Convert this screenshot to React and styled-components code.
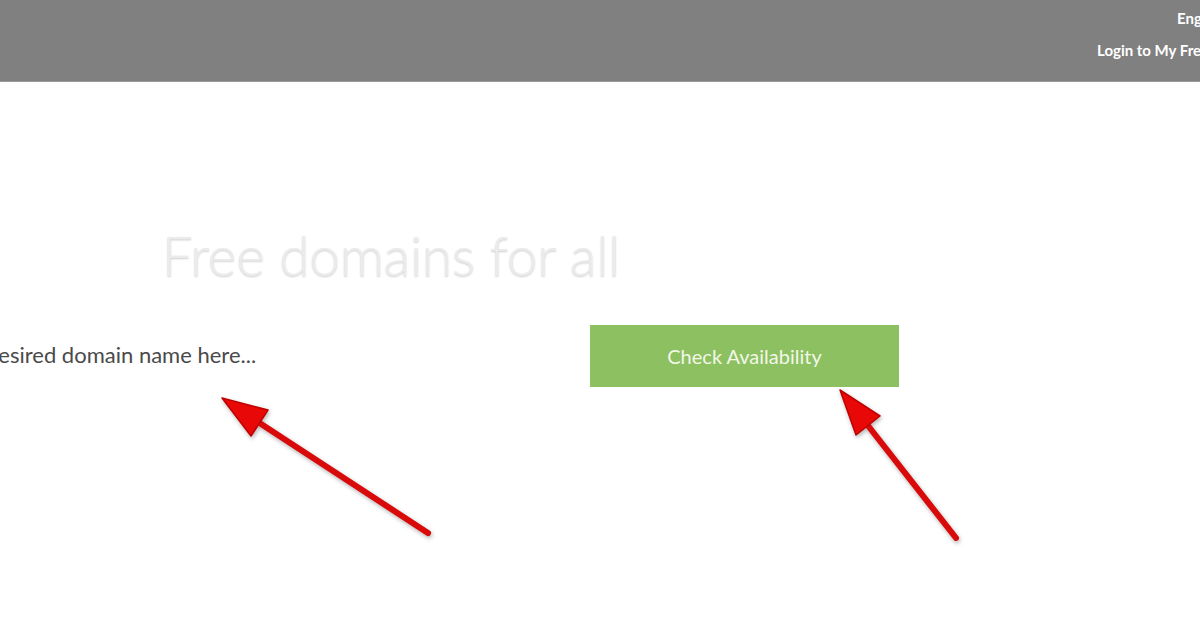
import React from 'react';
import styled, { createGlobalStyle } from 'styled-components';

const GlobalStyle = createGlobalStyle`
  html, body {
    margin: 0;
    padding: 0;
    background: #ffffff;
    overflow: hidden;
  }
  * {
    box-sizing: border-box;
    font-family: 'Lato', 'Open Sans', sans-serif;
  }
`;

const Page = styled.div`
  position: relative;
  width: 1200px;
  height: 627px;
  overflow: hidden;
  background: #fff;
`;

const TopBar = styled.header`
  height: 82px;
  background: #808080;
  display: flex;
  justify-content: flex-end;
  border-bottom: 1px solid #9a9a9a;
  overflow: hidden;
`;

const TopLinks = styled.nav`
  display: flex;
  flex-direction: column;
  align-items: flex-start;
  gap: 14px;
  padding-top: 9px;
  width: 103px;
  flex-shrink: 0;
`;

const TopLink = styled.a`
  color: #fff;
  font-size: 15px;
  font-weight: 700;
  text-decoration: none;
  white-space: nowrap;
  margin-left: ${(p) => p.$indent || 0}px;
`;

const Hero = styled.main`
  display: flex;
  flex-direction: column;
  padding-top: 140px;
`;

const Title = styled.h1`
  margin: 0 0 0 162px;
  font-size: 55px;
  font-weight: 300;
  line-height: 66px;
  color: #ebebeb;
  text-shadow: 0 1px 2px rgba(0, 0, 0, 0.2);
  letter-spacing: -0.3px;
`;

const SearchForm = styled.form`
  display: flex;
  align-items: center;
  margin-top: 37px;
  margin-left: -14px;
`;

const DomainInput = styled.input`
  width: 604px;
  height: 62px;
  border: none;
  outline: none;
  background: transparent;
  padding: 0 0 4px 0;
  font-size: 22px;
  color: #444;
  &::placeholder {
    color: #4a4a4a;
  }
`;

const CheckButton = styled.button`
  width: 309px;
  height: 62px;
  border: none;
  background: #8cc061;
  color: #f2f7e8;
  font-size: 20px;
  font-weight: 400;
  cursor: pointer;
  padding-bottom: 2px;
`;

const Annotations = styled.svg`
  position: absolute;
  inset: 0;
  pointer-events: none;
  filter: drop-shadow(1px 2px 2px rgba(0, 0, 0, 0.3));
`;

const Arrow = ({ line, head }) => (
  <g>
    <line
      x1={line[0]}
      y1={line[1]}
      x2={line[2]}
      y2={line[3]}
      stroke="#d90a0a"
      strokeWidth="6"
      strokeLinecap="round"
    />
    <polygon points={head} fill="#e80808" stroke="#c00000" strokeWidth="1.5" strokeLinejoin="round" />
  </g>
);

export default function App() {
  return (
    <>
      <GlobalStyle />
      <Page>
        <TopBar>
          <TopLinks>
            <TopLink href="#" $indent={80}>English</TopLink>
            <TopLink href="#">Login to My Freenom</TopLink>
          </TopLinks>
        </TopBar>
        <Hero>
          <Title>Free domains for all</Title>
          <SearchForm onSubmit={(e) => e.preventDefault()}>
            <DomainInput placeholder="desired domain name here..." />
            <CheckButton type="submit">Check Availability</CheckButton>
          </SearchForm>
        </Hero>
        <Annotations width="1200" height="627" viewBox="0 0 1200 627">
          <Arrow line={[255, 420, 428, 533]} head="222,398 251,436 268,410" />
          <Arrow line={[862, 418, 956, 538]} head="840,390 856,435 880,416" />
        </Annotations>
      </Page>
    </>
  );
}
